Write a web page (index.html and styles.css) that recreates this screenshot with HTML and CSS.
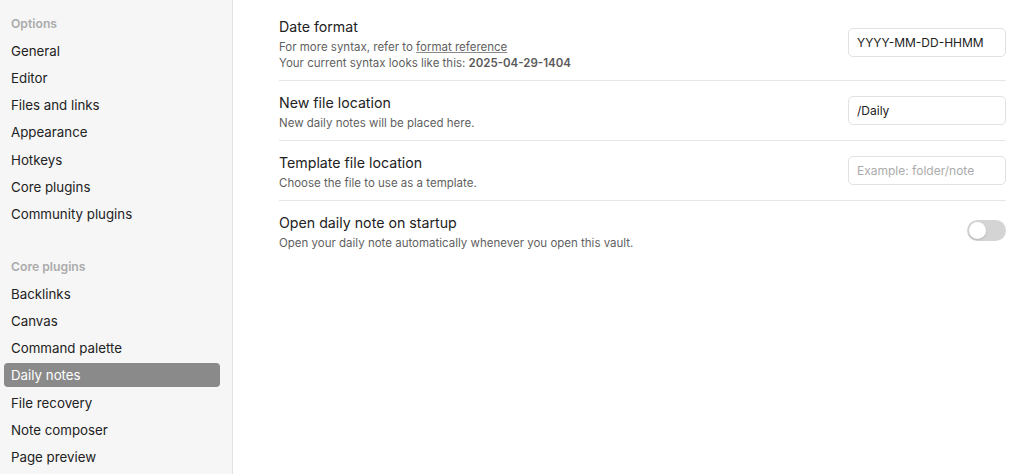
FILE: index.html
```html
<!DOCTYPE html>
<html lang="en">
<head>
<meta charset="utf-8">
<title>Settings – Daily notes</title>
<link rel="stylesheet" href="styles.css">
</head>
<body>
<div class="modal">
  <nav class="sidebar">
    <div class="group">
      <div class="group-title">Options</div>
      <div class="nav-item">General</div>
      <div class="nav-item">Editor</div>
      <div class="nav-item">Files and links</div>
      <div class="nav-item">Appearance</div>
      <div class="nav-item">Hotkeys</div>
      <div class="nav-item">Core plugins</div>
      <div class="nav-item">Community plugins</div>
    </div>
    <div class="group">
      <div class="group-title">Core plugins</div>
      <div class="nav-item">Backlinks</div>
      <div class="nav-item">Canvas</div>
      <div class="nav-item">Command palette</div>
      <div class="nav-item is-active">Daily notes</div>
      <div class="nav-item">File recovery</div>
      <div class="nav-item">Note composer</div>
      <div class="nav-item">Page preview</div>
    </div>
  </nav>
  <main class="content">
    <div class="setting">
      <div class="info">
        <div class="name">Date format</div>
        <div class="desc">For more syntax, refer to <a class="link">format reference</a><br>Your current syntax looks like this: <b class="strong">2025-04-29-1404</b></div>
      </div>
      <div class="control"><input class="text-input" type="text" value="YYYY-MM-DD-HHMM"></div>
    </div>
    <div class="setting">
      <div class="info">
        <div class="name">New file location</div>
        <div class="desc">New daily notes will be placed here.</div>
      </div>
      <div class="control"><input class="text-input" type="text" value="/Daily"></div>
    </div>
    <div class="setting">
      <div class="info">
        <div class="name">Template file location</div>
        <div class="desc">Choose the file to use as a template.</div>
      </div>
      <div class="control"><input class="text-input" type="text" placeholder="Example: folder/note"></div>
    </div>
    <div class="setting">
      <div class="info">
        <div class="name">Open daily note on startup</div>
        <div class="desc">Open your daily note automatically whenever you open this vault.</div>
      </div>
      <div class="control"><div class="toggle"><div class="knob"></div></div></div>
    </div>
  </main>
</div>
</body>
</html>
```
FILE: styles.css
```css
* { box-sizing: border-box; }
html, body {
  margin: 0;
  height: 100%;
  background: #ffffff;
  font-family: Inter, "Noto Sans", "Liberation Sans", sans-serif;
  color: #222222;
}
.modal {
  display: flex;
  height: 474px;
  overflow: hidden;
}
.sidebar {
  width: 233px;
  flex: none;
  background: #f6f6f6;
  border-right: 1px solid #e3e3e3;
  padding: 12px 12px 0 4px;
}
.group { margin-bottom: 29px; }
.group-title {
  height: 24px;
  line-height: 24px;
  padding-left: 7px;
  font-size: 12.2px;
  font-weight: 600;
  color: #ababab;
  margin-bottom: 3px;
}
.nav-item {
  height: 24px;
  line-height: 24px;
  padding-left: 7px;
  font-size: 13.3px;
  color: #222222;
  border-radius: 4px;
  margin-bottom: 3.17px;
  white-space: nowrap;
}
.nav-item.is-active {
  background: #8a8a8a;
  color: #ffffff;
}
.content {
  flex: 1;
  padding: 5px 18px 0 46px;
}
.setting {
  display: flex;
  align-items: center;
  padding: 12px 0 9px;
  border-top: 1px solid #e6e6e6;
}
.setting:first-child { border-top: none; }
.info { flex: 1; }
.name {
  font-size: 14.2px;
  line-height: 19px;
  color: #222222;
}
.desc {
  padding-top: 3px;
  font-size: 11.5px;
  line-height: 16px;
  color: #5f5f5f;
}
.link {
  color: #5f5f5f;
  text-decoration: underline;
  text-decoration-color: #8a8a8a;
  text-underline-offset: 1px;
}
.strong { font-weight: 600; color: #5a5a5a; }
.control { flex: none; display: flex; margin-bottom: 3px; }
.text-input {
  width: 158px;
  height: 29px;
  border: 1px solid #e2e2e2;
  border-radius: 5px;
  padding: 0 8px;
  font-family: inherit;
  font-size: 12px;
  color: #222222;
  background: #ffffff;
  outline: none;
}
.text-input::placeholder { color: #ababab; }
.toggle {
  width: 39px;
  height: 21px;
  border-radius: 11px;
  background: #d4d4d4;
  padding: 2px;
  display: flex;
  align-items: center;
}
.knob {
  width: 17px;
  height: 17px;
  border-radius: 50%;
  background: #ffffff;
  box-shadow: 0 1px 2px rgba(0,0,0,0.15);
}
```
